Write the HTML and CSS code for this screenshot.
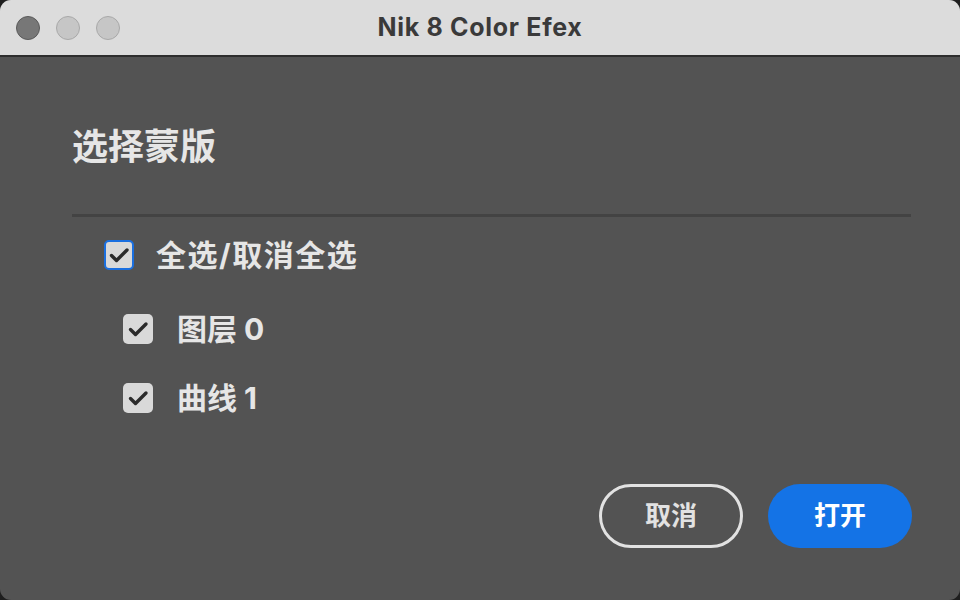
FILE: index.html
```html
<!DOCTYPE html>
<html lang="zh">
<head>
<meta charset="utf-8">
<title>Nik 8 Color Efex</title>
<link rel="stylesheet" href="styles.css">
</head>
<body>
<div class="window">
  <header class="titlebar">
    <div class="lights">
      <span class="light light-close"></span>
      <span class="light"></span>
      <span class="light"></span>
    </div>
    <div class="title">Nik 8 Color Efex</div>
  </header>
  <main class="content">
    <h1 class="heading">选择蒙版</h1>
    <div class="divider"></div>
    <div class="list">
      <label class="row row-all">
        <span class="box box-focus"><svg viewBox="0 0 30 30"><polyline points="7.5,15.5 12.5,20.5 23,10" /></svg></span>
        <span class="label label-all">全选/取消全选</span>
      </label>
      <label class="row row-sub">
        <span class="box"><svg viewBox="0 0 30 30"><polyline points="7.5,15.5 12.5,20.5 23,10" /></svg></span>
        <span class="label">图层 0</span>
      </label>
      <label class="row row-sub">
        <span class="box"><svg viewBox="0 0 30 30"><polyline points="7.5,15.5 12.5,20.5 23,10" /></svg></span>
        <span class="label">曲线 1</span>
      </label>
    </div>
    <div class="actions">
      <button class="btn btn-cancel">取消</button>
      <button class="btn btn-open">打开</button>
    </div>
  </main>
</div>
</body>
</html>
```

FILE: styles.css
```css
* { box-sizing: border-box; }
html, body { margin: 0; padding: 0; }
body {
  width: 960px;
  height: 600px;
  background: #1e1e1e;
  font-family: Inter, "Noto Sans CJK SC", "Liberation Sans", sans-serif;
  overflow: hidden;
}
.window {
  width: 960px;
  height: 600px;
  border-radius: 11px;
  overflow: hidden;
  background: #535353;
  display: flex;
  flex-direction: column;
}
.titlebar {
  height: 57px;
  flex: none;
  background: #dcdcdc;
  border-bottom: 2px solid #2e2e2e;
  position: relative;
  display: flex;
  align-items: center;
  justify-content: center;
}
.lights {
  position: absolute;
  left: 16px;
  top: 16px;
  display: flex;
  gap: 16px;
}
.light {
  width: 24px;
  height: 24px;
  border-radius: 50%;
  background: #c6c6c6;
  border: 1px solid #a9a9a9;
}
.light-close {
  background: #777777;
  border-color: #5a5a5a;
}
.title {
  font-family: Inter, "Liberation Sans", sans-serif;
  font-weight: 700;
  font-size: 25px;
  color: #3a3a3a;
  letter-spacing: 0.7px;
  margin-top: -2px;
}
.content {
  flex: 1;
  display: flex;
  flex-direction: column;
  padding: 0 48px 52px 72px;
}
.heading {
  margin: 67px 0 0 0;
  font-family: "Noto Sans CJK SC", sans-serif;
  font-size: 36px;
  line-height: 40px;
  font-weight: 700;
  color: #e6e6e6;
}
.divider {
  height: 3px;
  background: #434343;
  margin-top: 50px;
  margin-right: 1px;
}
.list {
  display: flex;
  flex-direction: column;
  margin-top: 21px;
}
.row {
  display: flex;
  align-items: center;
  height: 34px;
}
.row-all { padding-left: 32px; gap: 22px; }
.row-sub { padding-left: 51px; gap: 24px; margin-top: 35px; }
.row-all + .row-sub { margin-top: 40px; }
.label {
  font-family: Inter, "Noto Sans CJK SC", sans-serif;
  font-weight: 700;
  font-size: 30px;
  line-height: 34px;
  color: #e6e6e6;
}
.label-all { letter-spacing: 1.5px; }
.box {
  width: 30px;
  height: 30px;
  border-radius: 5px;
  background: #d9d9d9;
  display: flex;
  align-items: center;
  justify-content: center;
  flex: none;
}
.box svg { width: 30px; height: 30px; flex: none; }
.box polyline {
  fill: none;
  stroke: #2b2b2b;
  stroke-width: 3.4;
  stroke-linecap: round;
  stroke-linejoin: round;
}
.box-focus {
  border: 2px solid #1a6fe0;
  width: 30px;
  height: 30px;
}
.box-focus svg { margin: -2px; }
.actions {
  margin-top: auto;
  display: flex;
  justify-content: flex-end;
  gap: 25px;
}
.btn {
  width: 144px;
  height: 64px;
  border-radius: 32px;
  font-family: "Noto Sans CJK SC", sans-serif;
  font-weight: 700;
  font-size: 26px;
  line-height: 1;
  cursor: pointer;
  padding: 0 0 4px 0;
}
.btn-cancel {
  background: transparent;
  border: 3px solid #e2e2e2;
  color: #e2e2e2;
}
.btn-open {
  background: #1473e6;
  border: none;
  color: #ffffff;
}
```
